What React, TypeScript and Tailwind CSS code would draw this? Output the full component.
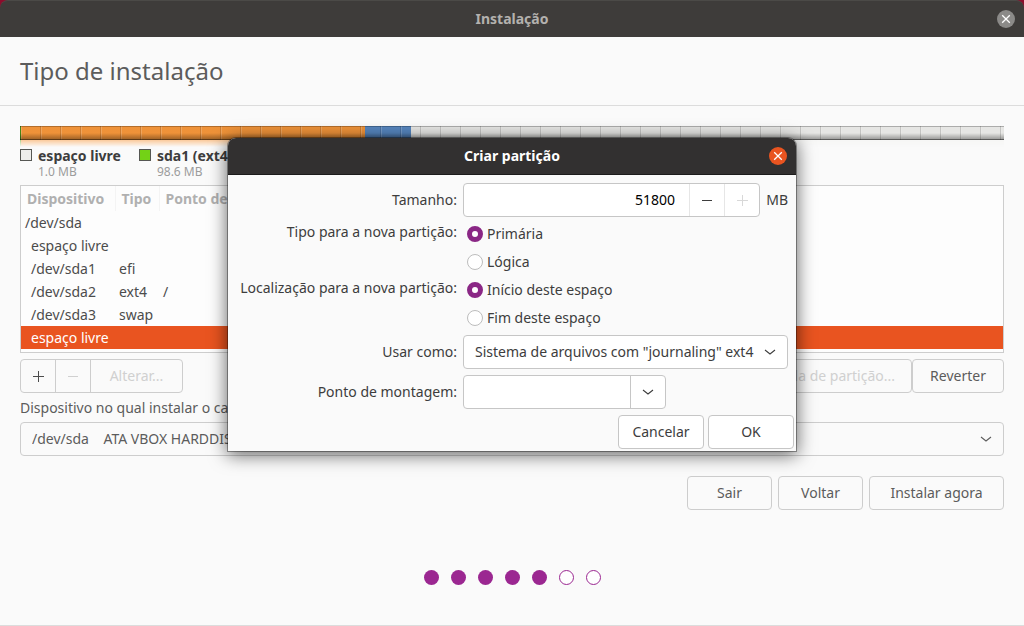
import { Fragment } from "react";

type Segment = { id: string; weight: number; color: string };

const segments: Segment[] = [
  { id: "sda1", weight: 1, color: "bg-[#55a51c]" },
  { id: "sda2", weight: 344, color: "bg-[#fb9a3c]" },
  { id: "sda3", weight: 46, color: "bg-[#5a8cc8]" },
  { id: "free", weight: 593, color: "bg-[#f2f2f0]" },
];

const legend = [
  { name: "espaço livre", size: "1.0 MB", color: "bg-[#eeeeec]" },
  { name: "sda1 (ext4)", size: "98.6 MB", color: "bg-[#73d216]" },
];

const rows = [
  { device: "/dev/sda", type: "", mount: "", root: true },
  { device: "espaço livre", type: "", mount: "" },
  { device: "/dev/sda1", type: "efi", mount: "" },
  { device: "/dev/sda2", type: "ext4", mount: "/" },
  { device: "/dev/sda3", type: "swap", mount: "" },
  { device: "espaço livre", type: "", mount: "", selected: true },
];

const radioGroups = [
  {
    name: "kind",
    label: "Tipo para a nova partição:",
    options: ["Primária", "Lógica"],
  },
  {
    name: "place",
    label: "Localização para a nova partição:",
    options: ["Início deste espaço", "Fim deste espaço"],
  },
];

const steps = [true, true, true, true, true, false, false];

const mainButton =
  "h-[34px] rounded border border-[#cdcdcd] bg-[#fafafa] text-[#5c5c5c]";
const dialogButton =
  "h-[34px] w-[86px] rounded border border-[#c6c6c6] bg-white text-[#3d3d3d]";

function Chevron({ className }: { className: string }) {
  return (
    <svg viewBox="0 0 12 8" width="12" height="8" className={className} aria-hidden="true">
      <path d="M1 2 6 6l5-4" fill="none" stroke="currentColor" strokeWidth="1.1" />
    </svg>
  );
}

function Plus() {
  return (
    <svg viewBox="0 0 11 11" width="11" height="11" className="mx-auto" aria-hidden="true">
      <path d="M0 5.5h11M5.5 0v11" stroke="currentColor" strokeWidth="1" />
    </svg>
  );
}

function Minus() {
  return (
    <svg viewBox="0 0 11 11" width="11" height="11" className="mx-auto" aria-hidden="true">
      <path d="M0 5.5h10" stroke="currentColor" strokeWidth="1" />
    </svg>
  );
}

function Cross() {
  return (
    <svg viewBox="0 0 10 10" width="10" height="10" className="mx-auto" aria-hidden="true">
      <path d="m1.2 1.2 7.6 7.6M8.8 1.2l-7.6 7.6" stroke="currentColor" strokeWidth="1.3" />
    </svg>
  );
}

function TitleBar() {
  return (
    <div className="grid h-[37px] grid-cols-[1fr_auto_1fr] items-center rounded-t-lg border-t border-[#4b4a47] bg-[#3e3c3a] px-[9px]">
      <span className="col-start-2 font-bold text-[#b3b1ae]">Instalação</span>
      <button
        type="button"
        aria-label="Fechar"
        className="size-[18px] justify-self-end rounded-full bg-[#8b8a88] text-white"
      >
        <Cross />
      </button>
    </div>
  );
}

function DiskBar() {
  return (
    <div className="relative">
      <div className="flex">
        {segments.map((s) => (
          <div key={s.id} style={{ flexGrow: s.weight }} className="basis-0">
            <div className={`h-3.5 ${s.color}`} />
            <div
              className={`h-[7px] opacity-50 mask-b-from-0% mask-b-to-100% ${s.color}`}
            />
          </div>
        ))}
      </div>
      {/* shading and ruler marks */}
      <div className="absolute inset-x-0 top-0 h-3.5 border-y border-t-black/25 border-b-black/40 bg-[repeating-linear-gradient(to_right,rgba(0,0,0,0.15)_0px_1px,rgba(255,255,255,0.2)_1px_2px,transparent_2px_20px)]" />
      <div className="absolute inset-x-0 top-0 h-3.5 bg-linear-to-b from-black/5 from-50% to-black/40" />
    </div>
  );
}

function Legend() {
  return (
    <ul className="flex gap-4.5">
      {legend.map((item) => (
        <li key={item.name} className="flex gap-1.5">
          <span className={`mt-0.5 size-3 border border-[#555753] ${item.color}`} />
          <span>
            <span className="block font-bold text-[#3d3d3d]">{item.name}</span>
            <span className="block text-[12px] leading-[14px] text-[#9c9c9c]">{item.size}</span>
          </span>
        </li>
      ))}
    </ul>
  );
}

function PartitionTable() {
  return (
    <div className="mt-1.5 border border-[#cdcdcd] bg-[#fdfdfd] pb-[3px]">
      <table className="w-full table-fixed border-collapse text-left">
        <colgroup>
          <col className="w-[94px]" />
          <col className="w-[44px]" />
          <col />
        </colgroup>
        <thead>
          <tr className="h-[25px] text-[#b0b0b0]">
            <th className="border-r border-[#f4f4f4] p-0 pl-1.5">Dispositivo</th>
            <th className="border-r border-[#f4f4f4] p-0 pl-1.5">Tipo</th>
            <th className="p-0 pl-1.5">Ponto de montagem</th>
          </tr>
        </thead>
        <tbody>
          {rows.map((row, i) => (
            <tr
              key={i}
              className={row.selected ? "h-[23px] bg-[#e95420] text-white" : "h-[23px]"}
            >
              <td className={row.root ? "p-0 pl-1" : "p-0 pl-2.5"}>{row.device}</td>
              <td className="p-0 pl-1">{row.type}</td>
              <td className="p-0 pl-1">{row.mount}</td>
            </tr>
          ))}
        </tbody>
      </table>
    </div>
  );
}

function CreatePartitionDialog() {
  return (
    <div
      role="dialog"
      aria-labelledby="dialog-title"
      className="w-[568px] rounded-t-lg bg-[#fafafa] text-[#3d3d3d] shadow-[0_0_0_1px_rgba(0,0,0,0.35),0_3px_18px_1px_rgba(0,0,0,0.6)]"
    >
      <div className="grid h-[37px] grid-cols-[1fr_auto_1fr] items-center rounded-t-lg border-b border-[#1c1b1b] bg-[#323030] px-[9px]">
        <h2 id="dialog-title" className="col-start-2 font-bold text-white">
          Criar partição
        </h2>
        <button
          type="button"
          aria-label="Fechar"
          className="size-[18px] justify-self-end rounded-full bg-[#e95420] text-white"
        >
          <Cross />
        </button>
      </div>

      <form className="grid grid-cols-[221px_1fr] items-center gap-1.5 px-2 pt-2">
        <label htmlFor="size" className="text-right">
          Tamanho:
        </label>
        <div className="flex items-center justify-between">
          <div className="flex h-[34px] w-[297px] overflow-hidden rounded border border-[#c6c6c6] bg-white">
            <input
              id="size"
              defaultValue="51800"
              className="min-w-0 flex-1 pr-3.5 text-right text-black outline-none"
            />
            <button type="button" aria-label="Diminuir" className="w-[35px] border-l border-[#e6e6e6]">
              <Minus />
            </button>
            <button
              type="button"
              aria-label="Aumentar"
              disabled
              className="w-[35px] border-l border-[#e6e6e6] text-[#d8d8d8]"
            >
              <Plus />
            </button>
          </div>
          <span>MB</span>
        </div>

        {radioGroups.map((group) => (
          <Fragment key={group.name}>
            <span id={group.name} className="self-start text-right">
              {group.label}
            </span>
            <div role="radiogroup" aria-labelledby={group.name} className="space-y-1.5 pl-1">
              {group.options.map((option, i) => (
                <label key={option} className="flex h-[22px] items-center gap-1">
                  <input
                    type="radio"
                    name={group.name}
                    defaultChecked={i === 0}
                    className="size-4 appearance-none rounded-full border border-[#bdbdbd] bg-white checked:border-[5px] checked:border-[#8a2785]"
                  />
                  {option}
                </label>
              ))}
            </div>
          </Fragment>
        ))}

        <label htmlFor="use-as" className="text-right">
          Usar como:
        </label>
        <div className="grid items-center">
          <select
            id="use-as"
            className="col-start-1 row-start-1 h-[34px] w-full appearance-none rounded border border-[#c6c6c6] bg-white pl-[11px]"
          >
            <option>Sistema de arquivos com "journaling" ext4</option>
          </select>
          <Chevron className="pointer-events-none col-start-1 row-start-1 mr-3 justify-self-end" />
        </div>

        <label htmlFor="mount" className="text-right">
          Ponto de montagem:
        </label>
        <div className="flex h-[34px] w-[203px] overflow-hidden rounded border border-[#c6c6c6] bg-white">
          <input id="mount" className="min-w-0 flex-1 px-2.5 outline-none" />
          <button type="button" aria-label="Mostrar opções" className="w-[35px] border-l border-[#c6c6c6]">
            <Chevron className="mx-auto" />
          </button>
        </div>
      </form>

      <div className="mt-1.5 flex justify-end gap-1 px-0.5 pb-0.5">
        <button type="button" className={dialogButton}>
          Cancelar
        </button>
        <button type="button" className={dialogButton}>
          OK
        </button>
      </div>
    </div>
  );
}

export default function App() {
  return (
    <div className="relative bg-[#8c0d2c] font-['Noto_Sans','Open_Sans',sans-serif] text-[14px] leading-[18px] text-[#4c4c4c]">
      <TitleBar />
      <div className="border-b border-[#dcdcdc] bg-[#fafafa] pb-10">
        <header className="flex h-[69px] items-center border-b border-[#dcdcdc] px-5">
          <h1 className="text-[24px] leading-8 text-[#5c5c5c]">Tipo de instalação</h1>
        </header>

        <main className="px-5 pt-5">
          <DiskBar />
          <Legend />
          <PartitionTable />

          <div className="mt-1.5 flex justify-between">
            <div className="flex h-[34px] divide-x divide-[#cdcdcd] rounded border border-[#cdcdcd]">
              <button type="button" aria-label="Adicionar" className="w-[35px]">
                <Plus />
              </button>
              <button type="button" aria-label="Remover" disabled className="w-[35px] text-[#d0d0d0]">
                <Minus />
              </button>
              <button type="button" disabled className="w-[91px] text-[#d0d0d0]">
                Alterar...
              </button>
            </div>
            <div className="flex">
              <button
                type="button"
                disabled
                className="h-[34px] rounded border border-[#cdcdcd] px-4 text-[#d0d0d0]"
              >
                Nova tabela de partição...
              </button>
              <button type="button" className={`w-[92px] ${mainButton}`}>
                Reverter
              </button>
            </div>
          </div>

          <label htmlFor="bootloader" className="mt-1.5 block text-[#5c5c5c]">
            Dispositivo no qual instalar o carregador de inicialização:
          </label>
          <div className="mt-[5px] grid items-center text-[#5c5c5c]">
            <select
              id="bootloader"
              className={`col-start-1 row-start-1 w-full appearance-none pl-[11px] ${mainButton}`}
            >
              <option>{"/dev/sda\u00a0\u00a0\u00a0\u00a0ATA VBOX HARDDISK"}</option>
            </select>
            <Chevron className="pointer-events-none col-start-1 row-start-1 mr-3 justify-self-end" />
          </div>

          <div className="mt-5 flex justify-end gap-1.5">
            <button type="button" className={`w-[85px] ${mainButton}`}>
              Sair
            </button>
            <button type="button" className={`w-[85px] ${mainButton}`}>
              Voltar
            </button>
            <button type="button" className={`w-[135px] ${mainButton}`}>
              Instalar agora
            </button>
          </div>
        </main>

        <div className="mt-15 flex justify-center gap-3">
          {steps.map((done, i) => (
            <span
              key={i}
              className={
                done
                  ? "size-[15px] rounded-full bg-[#9b2791]"
                  : "size-[15px] rounded-full border border-[#9b2791] bg-white"
              }
            />
          ))}
        </div>
      </div>

      <div className="absolute inset-x-0 top-[138px] flex justify-center">
        <CreatePartitionDialog />
      </div>
    </div>
  );
}
